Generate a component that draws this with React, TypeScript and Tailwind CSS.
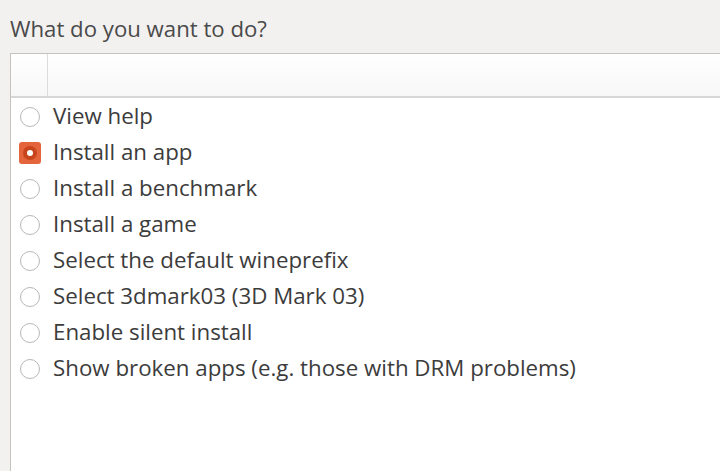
const options = [
  "View help",
  "Install an app",
  "Install a benchmark",
  "Install a game",
  "Select the default wineprefix",
  "Select 3dmark03 (3D Mark 03)",
  "Enable silent install",
  "Show broken apps (e.g. those with DRM problems)",
];

function Radio({ checked }: { checked: boolean }) {
  if (checked) {
    return (
      <span className="flex h-[22px] w-[22px] items-center justify-center rounded-[3px] bg-[#e4643c]">
        <span className="flex h-[14px] w-[14px] items-center justify-center rounded-full bg-[#c8441c]">
          <span className="h-[6px] w-[6px] rounded-full bg-white" />
        </span>
      </span>
    );
  }
  return <span className="block h-[20px] w-[20px] rounded-full border border-[#b8b8b6] bg-white" />;
}

export default function App() {
  const selected = 1;
  return (
    <div
      className="h-[471px] w-[720px] overflow-hidden bg-[#f2f1f0] text-[#3c3c3c]"
      style={{ fontFamily: '"Open Sans", "DejaVu Sans", sans-serif' }}
    >
      <div className="pl-[10px] pt-[15px] text-[22.2px] leading-[28px] text-[#4a4a4a]">What do you want to do?</div>
      <div className="ml-[10px] mt-[10px] h-[600px] border-l border-t border-[#c4c3c0] bg-white">
        <div className="flex h-[44px] border-b-2 border-[#d6d6d5] bg-gradient-to-b from-white to-[#f7f7f7]">
          <div className="w-[37px] border-r border-[#dcdcdb]" />
          <div className="flex-1" />
        </div>
        <ul className="pt-[1px]">
          {options.map((label, i) => (
            <li key={label} className="flex h-[36px] items-center">
              <div className="flex w-[38px] justify-center">
                <Radio checked={i === selected} />
              </div>
              <span className="pb-[2px] pl-[4px] text-[22.3px] leading-[28px]">{label}</span>
            </li>
          ))}
        </ul>
      </div>
    </div>
  );
}
